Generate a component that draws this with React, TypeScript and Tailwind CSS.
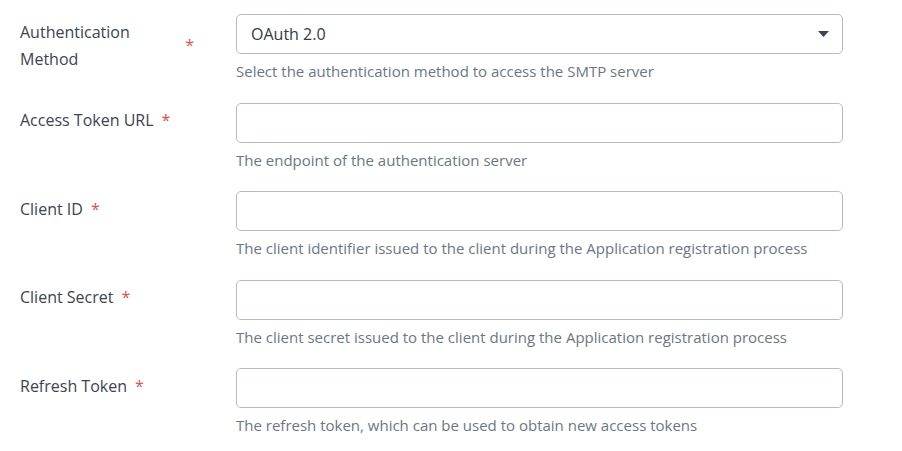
import React from "react";

const rows = [
  { label: "Authentication Method", help: "Select the authentication method to access the SMTP server", select: true },
  { label: "Access Token URL", help: "The endpoint of the authentication server" },
  { label: "Client ID", help: "The client identifier issued to the client during the Application registration process" },
  { label: "Client Secret", help: "The client secret issued to the client during the Application registration process" },
  { label: "Refresh Token", help: "The refresh token, which can be used to obtain new access tokens" },
];

export default function App() {
  return (
    <div className="w-[902px] h-[451px] bg-white pl-[20px] pt-[14px]" style={{ fontFamily: '"Open Sans", sans-serif' }}>
      {rows.map((r) => (
        <div key={r.label} className="flex h-[88.5px]">
          <div className="w-[216px] pr-[42px] pt-[4.5px] flex items-center self-start">
            <span className="text-[16px] leading-[27px] text-[#3b4452]">{r.label}</span>
            <span className="ml-[8px] text-[16px] leading-[27px] text-[#d9534f] shrink-0">*</span>
          </div>
          <div className="w-[607px]">
            {r.select ? (
              <div className="h-[40px] rounded-[5px] border border-[#b3bcc6] flex items-center justify-between pl-[14px] pr-[13px]">
                <span className="text-[16px] text-[#333a44]">OAuth 2.0</span>
                <svg width="11" height="6" viewBox="0 0 11 6">
                  <path d="M0 0 H11 L5.5 6 Z" fill="#3b4452" />
                </svg>
              </div>
            ) : (
              <input className="block w-full h-[40px] rounded-[5px] border border-[#b3bcc6] outline-none" />
            )}
            <div className="mt-[6px] text-[15px] leading-[22px] text-[#6b7785]">{r.help}</div>
          </div>
        </div>
      ))}
    </div>
  );
}
